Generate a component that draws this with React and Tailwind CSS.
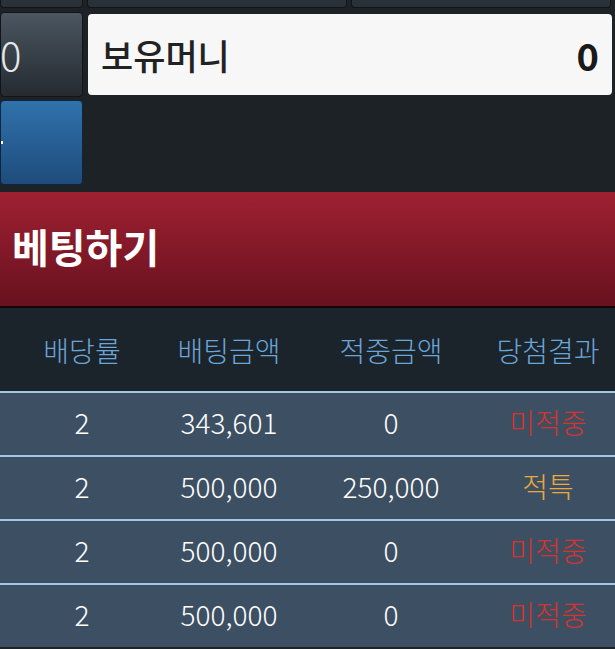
import React from 'react';

const rows = [
  { rate: '2', bet: '343,601', win: '0', result: '미적중', tone: 'lose' },
  { rate: '2', bet: '500,000', win: '250,000', result: '적특', tone: 'refund' },
  { rate: '2', bet: '500,000', win: '0', result: '미적중', tone: 'lose' },
  { rate: '2', bet: '500,000', win: '0', result: '미적중', tone: 'lose' },
];

const font = { fontFamily: '"Noto Sans CJK KR", "Noto Sans", sans-serif' };

const App = () => {
  return (
    <div className="w-[615px] h-[649px] overflow-hidden bg-[#1d2227] flex flex-col" style={font}>
      {/* 윗줄 버튼 (잘림) */}
      <div className="flex gap-[4px] h-[8px]">
        <div className="w-[83px] bg-[#2b3138] border border-t-0 border-[#111418] rounded-b-[4px]" />
        <div className="w-[260px] bg-[#2b3138] border border-t-0 border-[#111418] rounded-b-[4px]" />
        <div className="w-[260px] bg-[#2b3138] border border-t-0 border-[#111418] rounded-b-[4px]" />
      </div>

      {/* 보유머니 줄 */}
      <div className="flex gap-[5px] mt-[4px]">
        <div className="w-[83px] h-[85px] rounded-[4px] border border-[#111418] bg-linear-to-b from-[#4b5661] to-[#252b31] flex items-center overflow-hidden pb-[2px]">
          <span className="text-[40px] font-light text-[#e6e8ea] leading-none -ml-[1px]">0</span>
        </div>
        <div className="w-[524px] h-[81px] self-center rounded-[4px] bg-[#f7f7f8] flex items-center justify-between px-[13px]">
          <span className="text-[35px] font-medium text-[#222] leading-none">보유머니</span>
          <span className="text-[38px] font-bold text-[#1a1a1a] leading-none">0</span>
        </div>
      </div>

      {/* 파란 버튼 */}
      <div className="flex mt-[3px]">
        <div className="w-[83px] h-[85px] rounded-[4px] border border-[#10253c] bg-linear-to-b from-[#3072ac] to-[#1e4c7c] flex items-center">
          <span className="w-[2px] h-[3px] bg-white" />
        </div>
      </div>

      {/* 베팅하기 헤더 */}
      <div className="mt-[7px] h-[116px] bg-linear-to-b from-[#9f2131] to-[#68111f] border-b-2 border-[#140606] flex items-center pl-[12px] pb-[6px]">
        <span className="text-[40px] font-bold text-white leading-none">베팅하기</span>
      </div>

      {/* 표 머리 */}
      <div className="h-[83px] bg-[#1b232b] grid grid-cols-[164px_130px_194px_120px] items-center text-[28px] font-light text-[#6ba6d8]">
        <div className="text-center">배당률</div>
        <div className="text-center">배팅금액</div>
        <div className="text-center">적중금액</div>
        <div className="text-center">당첨결과</div>
      </div>

      {/* 표 내용 */}
      {rows.map((row, index) => (
        <div
          key={index}
          className="h-[64px] shrink-0 border-t-2 border-[#9fc6e2] bg-[#3d5063] grid grid-cols-[164px_130px_194px_120px] items-center pb-[4px] text-[28px] font-light text-white"
        >
          <div className="text-center">{row.rate}</div>
          <div className="text-center">{row.bet}</div>
          <div className="text-center">{row.win}</div>
          <div className={row.tone === 'refund' ? 'text-center text-[#e9a93c]' : 'text-center text-[#d9322d]'}>
            {row.result}
          </div>
        </div>
      ))}
    </div>
  );
};

export default App;
